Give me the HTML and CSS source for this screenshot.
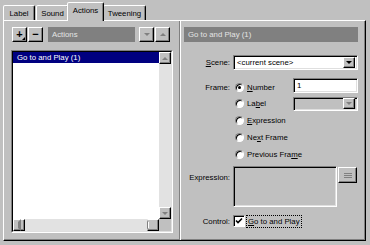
FILE: index.html
```html
<!DOCTYPE html>
<html lang="en">
<head>
    <meta charset="UTF-8">
    <title>Frame Actions</title>
    <link rel="stylesheet" href="styles.css">
</head>
<body>
    <!-- TABS -->
    <div class="tabs">
        <div class="tab tab-label">Label</div>
        <div class="tab tab-sound">Sound</div>
        <div class="tab tab-actions active">Actions</div>
        <div class="tab tab-tweening">Tweening</div>
    </div>

    <div class="panel">
        <!-- ACTION LIST -->
        <div class="left">
            <div class="toolbar">
                <div class="tool raised plus">+<span class="corner"></span></div>
                <div class="tool raised minus">&minus;</div>
                <div class="bar-title actions-title">Actions</div>
                <div class="tool raised move-down"><span class="tri down grey"></span></div>
                <div class="tool raised move-up"><span class="tri up grey"></span></div>
            </div>

            <div class="listbox">
                <div class="listbox-inner">
                    <div class="list-main">
                        <div class="list-items">
                            <div class="list-item selected">Go to and Play (1)</div>
                        </div>
                        <div class="vscroll">
                            <div class="sb-btn raised"><span class="tri up grey"></span></div>
                            <div class="sb-track"></div>
                            <div class="sb-btn raised"><span class="tri down grey"></span></div>
                        </div>
                    </div>
                    <div class="hscroll">
                        <div class="sb-btn raised"><span class="tri left grey"></span></div>
                        <div class="sb-track"></div>
                        <div class="sb-btn raised"><span class="tri right grey"></span></div>
                        <div class="sb-corner"></div>
                    </div>
                </div>
            </div>
        </div>

        <!-- ACTION SETTINGS -->
        <div class="right">
            <div class="bar-title">Go to and Play (1)</div>

            <div class="row scene-row">
                <span class="lbl"><u>S</u>cene:</span>
                <div class="combo">
                    <span class="combo-text">&lt;current scene&gt;</span>
                    <span class="combo-btn raised"><span class="tri down"></span></span>
                </div>
            </div>

            <div class="row radio-row first">
                <span class="lbl">Frame:</span>
                <span class="radio checked"></span>
                <span class="opt"><u>N</u>umber</span>
                <div class="textbox">1</div>
            </div>
            <div class="row radio-row">
                <span class="lbl"></span>
                <span class="radio"></span>
                <span class="opt">La<u>b</u>el</span>
                <div class="combo small disabled">
                    <span class="combo-text"></span>
                    <span class="combo-btn raised"><span class="tri down grey"></span></span>
                </div>
            </div>
            <div class="row radio-row">
                <span class="lbl"></span>
                <span class="radio"></span>
                <span class="opt"><u>E</u>xpression</span>
            </div>
            <div class="row radio-row">
                <span class="lbl"></span>
                <span class="radio"></span>
                <span class="opt">Ne<u>x</u>t Frame</span>
            </div>
            <div class="row radio-row">
                <span class="lbl"></span>
                <span class="radio"></span>
                <span class="opt">Previous Fra<u>m</u>e</span>
            </div>

            <div class="row expr-row">
                <span class="lbl">Expression:</span>
                <div class="textarea"></div>
                <div class="eq-btn raised"><span class="eq-lines"></span></div>
            </div>

            <div class="row control-row">
                <span class="lbl">Control:</span>
                <span class="checkbox">
                    <svg width="8" height="8" viewBox="0 0 8 8"><path d="M1 3.5 L3 5.5 L7 1.5" fill="none" stroke="#000" stroke-width="1.6"/></svg>
                </span>
                <span class="focus-text"><u>G</u>o to and Play</span>
            </div>
        </div>
    </div>
</body>
</html>
```

FILE: styles.css
```css
* {
    box-sizing: border-box;
}

body {
    margin: 0;
    width: 370px;
    height: 245px;
    overflow: hidden;
    background: #c0c0c0;
    color: #000;
    font-family: "Liberation Sans", Arial, sans-serif;
    font-size: 7.8px;
}

u {
    text-decoration-thickness: 1px;
    text-underline-offset: 1px;
}

/* Shared 3D looks */
.raised {
    background: #c0c0c0;
    border: 1px solid;
    border-color: #fff #000 #000 #fff;
    box-shadow: inset -1px -1px #808080;
}

.tri {
    width: 0;
    height: 0;
    border: 3px solid transparent;
}

.tri.down {
    border-top-color: #000;
    border-bottom-width: 0;
}

.tri.up {
    border-bottom-color: #000;
    border-top-width: 0;
}

.tri.left {
    border-right-color: #000;
    border-left-width: 0;
}

.tri.right {
    border-left-color: #000;
    border-right-width: 0;
}

.tri.grey.down { border-top-color: #808080; }
.tri.grey.up { border-bottom-color: #808080; }
.tri.grey.left { border-right-color: #808080; }
.tri.grey.right { border-left-color: #808080; }

/* Tabs */
.tabs {
    display: flex;
    align-items: flex-end;
    height: 20px;
    padding-left: 3px;
}

.tab {
    height: 15px;
    display: flex;
    align-items: center;
    justify-content: center;
    border: 1px solid;
    border-bottom: none;
    border-color: #fff #000 transparent #fff;
    border-radius: 2px 2px 0 0;
    box-shadow: inset -1px 0 #808080;
    background: #c0c0c0;
}

.tab-label { width: 32px; }
.tab-sound { width: 33px; margin-left: 1px; }
.tab-actions { width: 37px; }
.tab-tweening { width: 43px; }

.tab.active {
    height: 19px;
    margin: 0 -1px -1px -2px;
    position: relative;
    z-index: 1;
    padding-bottom: 3px;
}

/* Panel */
.panel {
    display: flex;
    margin-left: 3px;
    width: 363px;
    height: 221px;
    border: 1px solid;
    border-color: #fff #000 #000 #fff;
    box-shadow: inset -1px -1px #808080;
}

.left {
    width: 169px;
    padding: 6px 0 0 7px;
    margin-right: 6px;
}

.toolbar {
    display: flex;
    height: 15px;
    padding-left: 1px;
}

.tool {
    width: 15px;
    height: 15px;
    display: flex;
    align-items: center;
    justify-content: center;
    font-weight: bold;
    font-size: 11px;
    line-height: 1;
    position: relative;
}

.plus {
    padding-bottom: 1px;
}

.plus .corner {
    position: absolute;
    right: 1px;
    bottom: 1px;
    width: 0;
    height: 0;
    border-left: 3px solid transparent;
    border-bottom: 3px solid #000;
}

.minus {
    margin-left: 1px;
}

.bar-title {
    height: 15px;
    display: flex;
    align-items: center;
    padding-left: 4px;
    background: #808080;
    color: #e4e4e4;
}

.actions-title {
    width: 87px;
    margin-left: 5px;
}

.move-down {
    margin-left: 4px;
}

.move-up {
    margin-left: 1px;
}

/* List box */
.listbox {
    margin-top: 8px;
    width: 162px;
    height: 183px;
    border: 1px solid;
    border-color: #808080 #fff #fff #808080;
}

.listbox-inner {
    height: 100%;
    display: flex;
    flex-direction: column;
    border: 1px solid;
    border-color: #000 #dfdfdf #dfdfdf #000;
}

.list-main {
    flex: 1;
    display: flex;
}

.list-items {
    flex: 1;
    background: #fff;
}

.list-item {
    height: 11px;
    padding-left: 4px;
    display: flex;
    align-items: center;
}

.list-item.selected {
    background: #000080;
    color: #fff;
}

.vscroll {
    width: 12px;
    display: flex;
    flex-direction: column;
}

.sb-btn {
    width: 12px;
    height: 12px;
    display: flex;
    align-items: center;
    justify-content: center;
    flex: none;
}

.sb-track {
    flex: 1;
    background: #e2e2e2;
}

.hscroll {
    height: 12px;
    display: flex;
}

.sb-corner {
    width: 12px;
    background: #c0c0c0;
}

/* Settings pane */
.right {
    flex: 1;
    padding: 6px 7px 0 4px;
    border-left: 1px solid #808080;
    box-shadow: inset 1px 0 #fff;
}

.row {
    display: flex;
    align-items: center;
}

.lbl {
    width: 46px;
    margin-right: 3px;
    text-align: right;
    flex: none;
}

.scene-row {
    margin-top: 13px;
    height: 15px;
}

.combo {
    flex: 1;
    height: 15px;
    display: flex;
    align-items: center;
    background: #fff;
    border: 1px solid;
    border-color: #808080 #fff #fff #808080;
    box-shadow: inset 1px 1px #000, inset -1px -1px #dfdfdf;
    padding: 2px;
}

.combo-text {
    flex: 1;
    padding-left: 1px;
}

.combo-btn {
    width: 12px;
    height: 11px;
    display: flex;
    align-items: center;
    justify-content: center;
}

.combo.small {
    flex: none;
    width: 65px;
    margin-left: auto;
    height: 14px;
}

.combo.disabled {
    background: #c0c0c0;
}

.radio-row {
    height: 17px;
}

.radio-row.first {
    margin-top: 8px;
    align-items: flex-start;
}

.radio-row.first .lbl,
.radio-row.first .radio,
.radio-row.first .opt {
    margin-top: 5px;
}

.radio {
    width: 9px;
    height: 9px;
    margin-left: 2px;
    border-radius: 50%;
    background: #fff;
    border: 1px solid;
    border-color: #808080 #fff #fff #808080;
    box-shadow: inset 1px 1px #000;
    position: relative;
    flex: none;
}

.radio.checked::after {
    content: '';
    position: absolute;
    left: 2px;
    top: 2px;
    width: 3px;
    height: 3px;
    border-radius: 50%;
    background: #000;
}

.opt {
    margin-left: 3px;
}

.textbox {
    width: 65px;
    height: 15px;
    margin-left: auto;
    background: #fff;
    border: 1px solid;
    border-color: #808080 #fff #fff #808080;
    box-shadow: inset 1px 1px #000, inset -1px -1px #dfdfdf;
    padding: 2px 3px;
    line-height: 10px;
}

.expr-row {
    margin-top: 3px;
    height: 41px;
    align-items: flex-start;
}

.expr-row .lbl {
    margin-top: 7px;
}

.textarea {
    width: 104px;
    height: 41px;
    border: 1px solid;
    border-color: #808080 #fff #fff #808080;
    box-shadow: inset 1px 1px #000, inset -1px -1px #dfdfdf;
}

.eq-btn {
    width: 19px;
    height: 16px;
    margin-left: 1px;
    margin-top: 1px;
    display: flex;
    align-items: center;
    justify-content: center;
}

.eq-lines {
    width: 8px;
    height: 5px;
    border-top: 1px solid #808080;
    border-bottom: 1px solid #808080;
    position: relative;
}

.eq-lines::after {
    content: '';
    position: absolute;
    left: 0;
    right: 0;
    top: 1px;
    border-top: 1px solid #808080;
}

.control-row {
    margin-top: 8px;
    height: 12px;
}

.checkbox {
    width: 12px;
    height: 12px;
    background: #fff;
    border: 1px solid;
    border-color: #808080 #fff #fff #808080;
    box-shadow: inset 1px 1px #000;
    display: flex;
    align-items: center;
    justify-content: center;
    flex: none;
}

.focus-text {
    margin-left: 1px;
    padding: 1px 1px;
    border: 1px dotted #000;
}
```
